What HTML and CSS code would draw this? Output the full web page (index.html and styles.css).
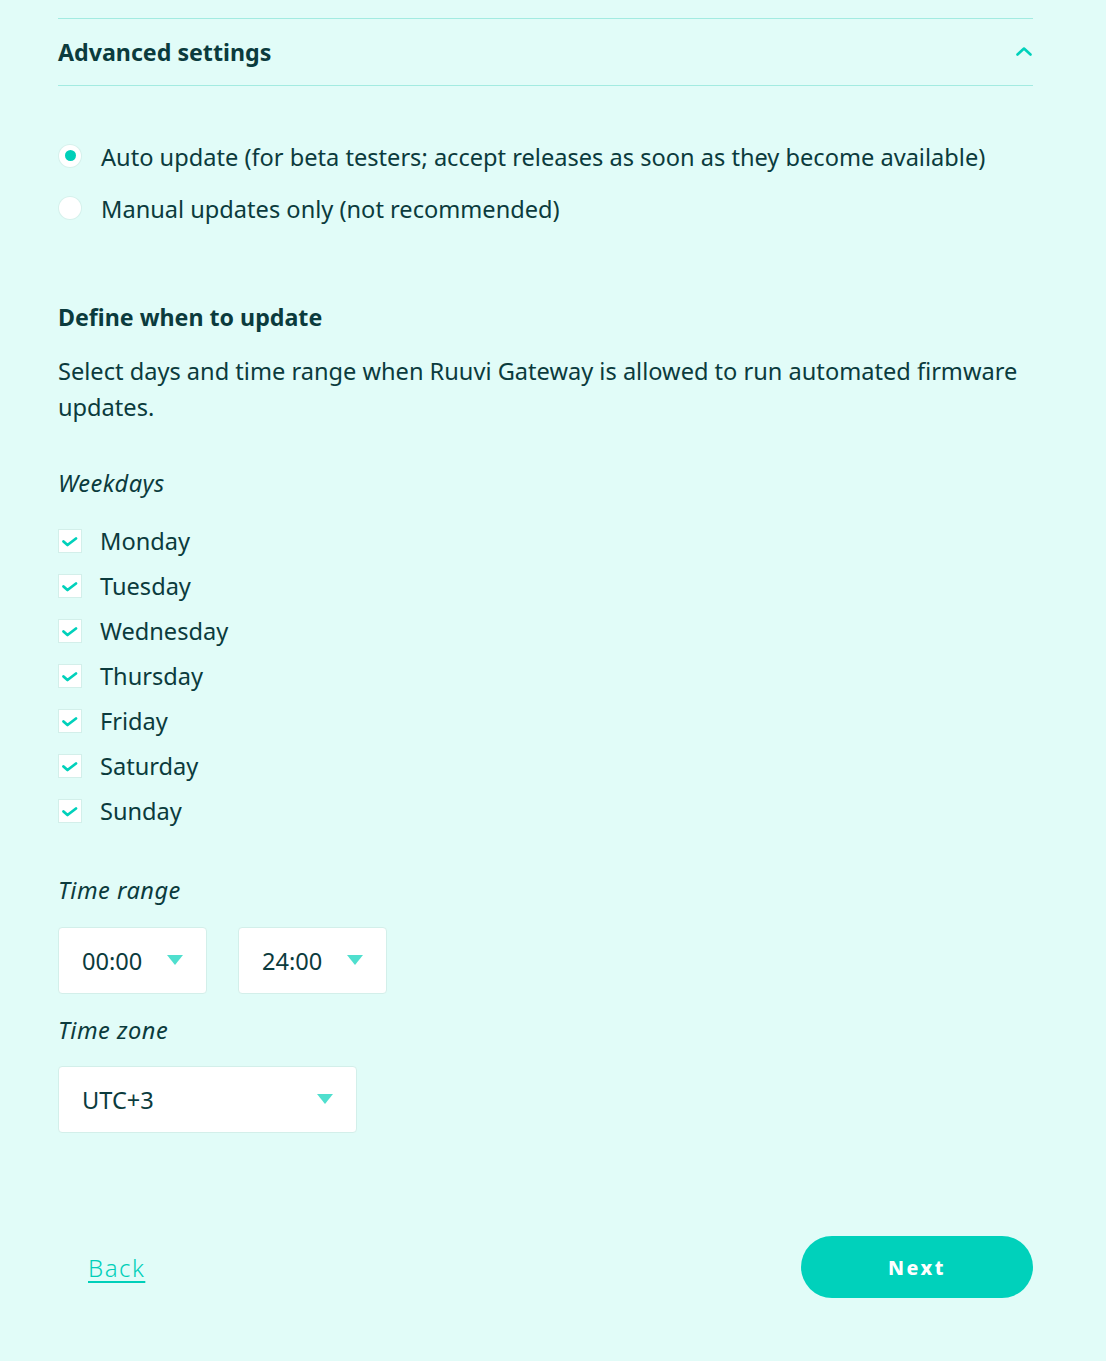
FILE: index.html
```html
<!DOCTYPE html>
<html lang="en">
<head>
<meta charset="utf-8">
<title>Advanced settings</title>
<link rel="stylesheet" href="styles.css">
</head>
<body>
<main class="page">
  <div class="acc-head">
    <h2 class="acc-title">Advanced settings</h2>
    <svg class="chevron" width="16" height="10" viewBox="0 0 16 10"><path d="M1.5 8.5 L8 2.5 L14.5 8.5" fill="none" stroke="#00d1bb" stroke-width="2.6" stroke-linecap="round" stroke-linejoin="round"/></svg>
  </div>

  <div class="radio-group">
    <label class="radio-row"><span class="radio checked"></span><span>Auto update (for beta testers; accept releases as soon as they become available)</span></label>
    <label class="radio-row"><span class="radio"></span><span>Manual updates only (not recommended)</span></label>
  </div>

  <h3 class="section-title">Define when to update</h3>
  <p class="desc">Select days and time range when Ruuvi Gateway is allowed to run automated firmware updates.</p>

  <div class="field-label">Weekdays</div>
  <div class="days">
    <label class="day"><span class="box"><svg viewBox="0 0 22 22" width="22" height="22"><path d="M4.5 11.5 L8.5 15 L17 8.5" fill="none" stroke="#00d1bb" stroke-width="2.8" stroke-linecap="round" stroke-linejoin="round"/></svg></span>Monday</label>
    <label class="day"><span class="box"><svg viewBox="0 0 22 22" width="22" height="22"><path d="M4.5 11.5 L8.5 15 L17 8.5" fill="none" stroke="#00d1bb" stroke-width="2.8" stroke-linecap="round" stroke-linejoin="round"/></svg></span>Tuesday</label>
    <label class="day"><span class="box"><svg viewBox="0 0 22 22" width="22" height="22"><path d="M4.5 11.5 L8.5 15 L17 8.5" fill="none" stroke="#00d1bb" stroke-width="2.8" stroke-linecap="round" stroke-linejoin="round"/></svg></span>Wednesday</label>
    <label class="day"><span class="box"><svg viewBox="0 0 22 22" width="22" height="22"><path d="M4.5 11.5 L8.5 15 L17 8.5" fill="none" stroke="#00d1bb" stroke-width="2.8" stroke-linecap="round" stroke-linejoin="round"/></svg></span>Thursday</label>
    <label class="day"><span class="box"><svg viewBox="0 0 22 22" width="22" height="22"><path d="M4.5 11.5 L8.5 15 L17 8.5" fill="none" stroke="#00d1bb" stroke-width="2.8" stroke-linecap="round" stroke-linejoin="round"/></svg></span>Friday</label>
    <label class="day"><span class="box"><svg viewBox="0 0 22 22" width="22" height="22"><path d="M4.5 11.5 L8.5 15 L17 8.5" fill="none" stroke="#00d1bb" stroke-width="2.8" stroke-linecap="round" stroke-linejoin="round"/></svg></span>Saturday</label>
    <label class="day"><span class="box"><svg viewBox="0 0 22 22" width="22" height="22"><path d="M4.5 11.5 L8.5 15 L17 8.5" fill="none" stroke="#00d1bb" stroke-width="2.8" stroke-linecap="round" stroke-linejoin="round"/></svg></span>Sunday</label>
  </div>

  <div class="field-label range-label">Time range</div>
  <div class="selects">
    <div class="select small"><span>00:00</span><span class="tri"></span></div>
    <div class="select small"><span>24:00</span><span class="tri"></span></div>
  </div>

  <div class="field-label tz-label">Time zone</div>
  <div class="select wide"><span>UTC+3</span><span class="tri"></span></div>

  <div class="actions">
    <a class="back" href="#">Back</a>
    <button class="next" type="button">Next</button>
  </div>
</main>
</body>
</html>
```

FILE: styles.css
```css
html, body {
  margin: 0;
  padding: 0;
  background: #e1fcf8;
}
body {
  font-family: "Noto Sans", "Open Sans", sans-serif;
  color: #0b3b3d;
  font-size: 23.6px;
}
.page {
  width: 975px;
  padding: 18px 0 0 58px;
}
.acc-head {
  border-top: 1px solid #a3ebe1;
  border-bottom: 1px solid #a3ebe1;
  height: 66px;
  display: flex;
  align-items: center;
  justify-content: space-between;
}
.acc-title {
  margin: 0;
  font-size: 23.2px;
  font-weight: 700;
  line-height: 30px;
}
.chevron {
  margin-right: 1px;
  margin-top: -2px;
}
.radio-group {
  margin-top: 53px;
  display: flex;
  flex-direction: column;
  gap: 16px;
}
.radio-row {
  display: flex;
  align-items: center;
  gap: 20px;
  line-height: 36px;
}
.radio {
  width: 22px;
  height: 22px;
  border-radius: 50%;
  background: #fff;
  box-shadow: 0 0 0 1px #d6f1ec;
  flex: none;
  display: flex;
  align-items: center;
  justify-content: center;
  margin-left: 1px;
  margin-top: -3px;
}
.radio.checked::after {
  content: "";
  width: 11px;
  height: 11px;
  border-radius: 50%;
  background: #00cfb9;
}
.section-title {
  margin: 75px 0 0;
  font-size: 23.2px;
  font-weight: 700;
  line-height: 30px;
}
.desc {
  margin: 21px 0 0;
  line-height: 36px;
}
.field-label {
  font-style: italic;
  line-height: 30px;
  margin-top: 43px;
  letter-spacing: 0.5px;
}
.days {
  margin-top: 28px;
  display: flex;
  flex-direction: column;
  gap: 15px;
}
.day {
  display: flex;
  align-items: center;
  gap: 19px;
  line-height: 30px;
}
.box {
  width: 22px;
  height: 22px;
  background: #fff;
  box-shadow: 0 0 0 1px #d3efea;
  margin-left: 1px;
  flex: none;
  display: block;
}
.box svg { display: block; }
.range-label { margin-top: 49px; }
.selects {
  margin-top: 22px;
  display: flex;
  gap: 31px;
}
.select {
  box-sizing: border-box;
  height: 67px;
  background: #fff;
  border: 1px solid #d3efea;
  border-radius: 4px;
  display: flex;
  align-items: center;
  justify-content: space-between;
  padding: 0 23px 0 23px;
}
.select.small { width: 149px; }
.select.wide { width: 299px; margin-top: 21px; }
.tz-label { margin-top: 21px; }
.tri {
  width: 0;
  height: 0;
  border-left: 8px solid transparent;
  border-right: 8px solid transparent;
  border-top: 10px solid #4fdfce;
  margin-top: -2px;
}
.actions {
  margin-top: 103px;
  display: flex;
  align-items: center;
  justify-content: space-between;
}
.back {
  margin-left: 30px;
  color: #00cfb9;
  font-size: 24px;
  font-weight: 300;
  letter-spacing: 1.5px;
  text-decoration: underline;
  text-decoration-thickness: 2px;
  text-underline-offset: 4px;
}
.next {
  width: 232px;
  height: 62px;
  border: none;
  border-radius: 31px;
  background: #00d1bb;
  color: #fff;
  font-family: "Noto Sans", sans-serif;
  font-weight: 800;
  font-size: 19.5px;
  letter-spacing: 2.5px;
  cursor: pointer;
}
```
